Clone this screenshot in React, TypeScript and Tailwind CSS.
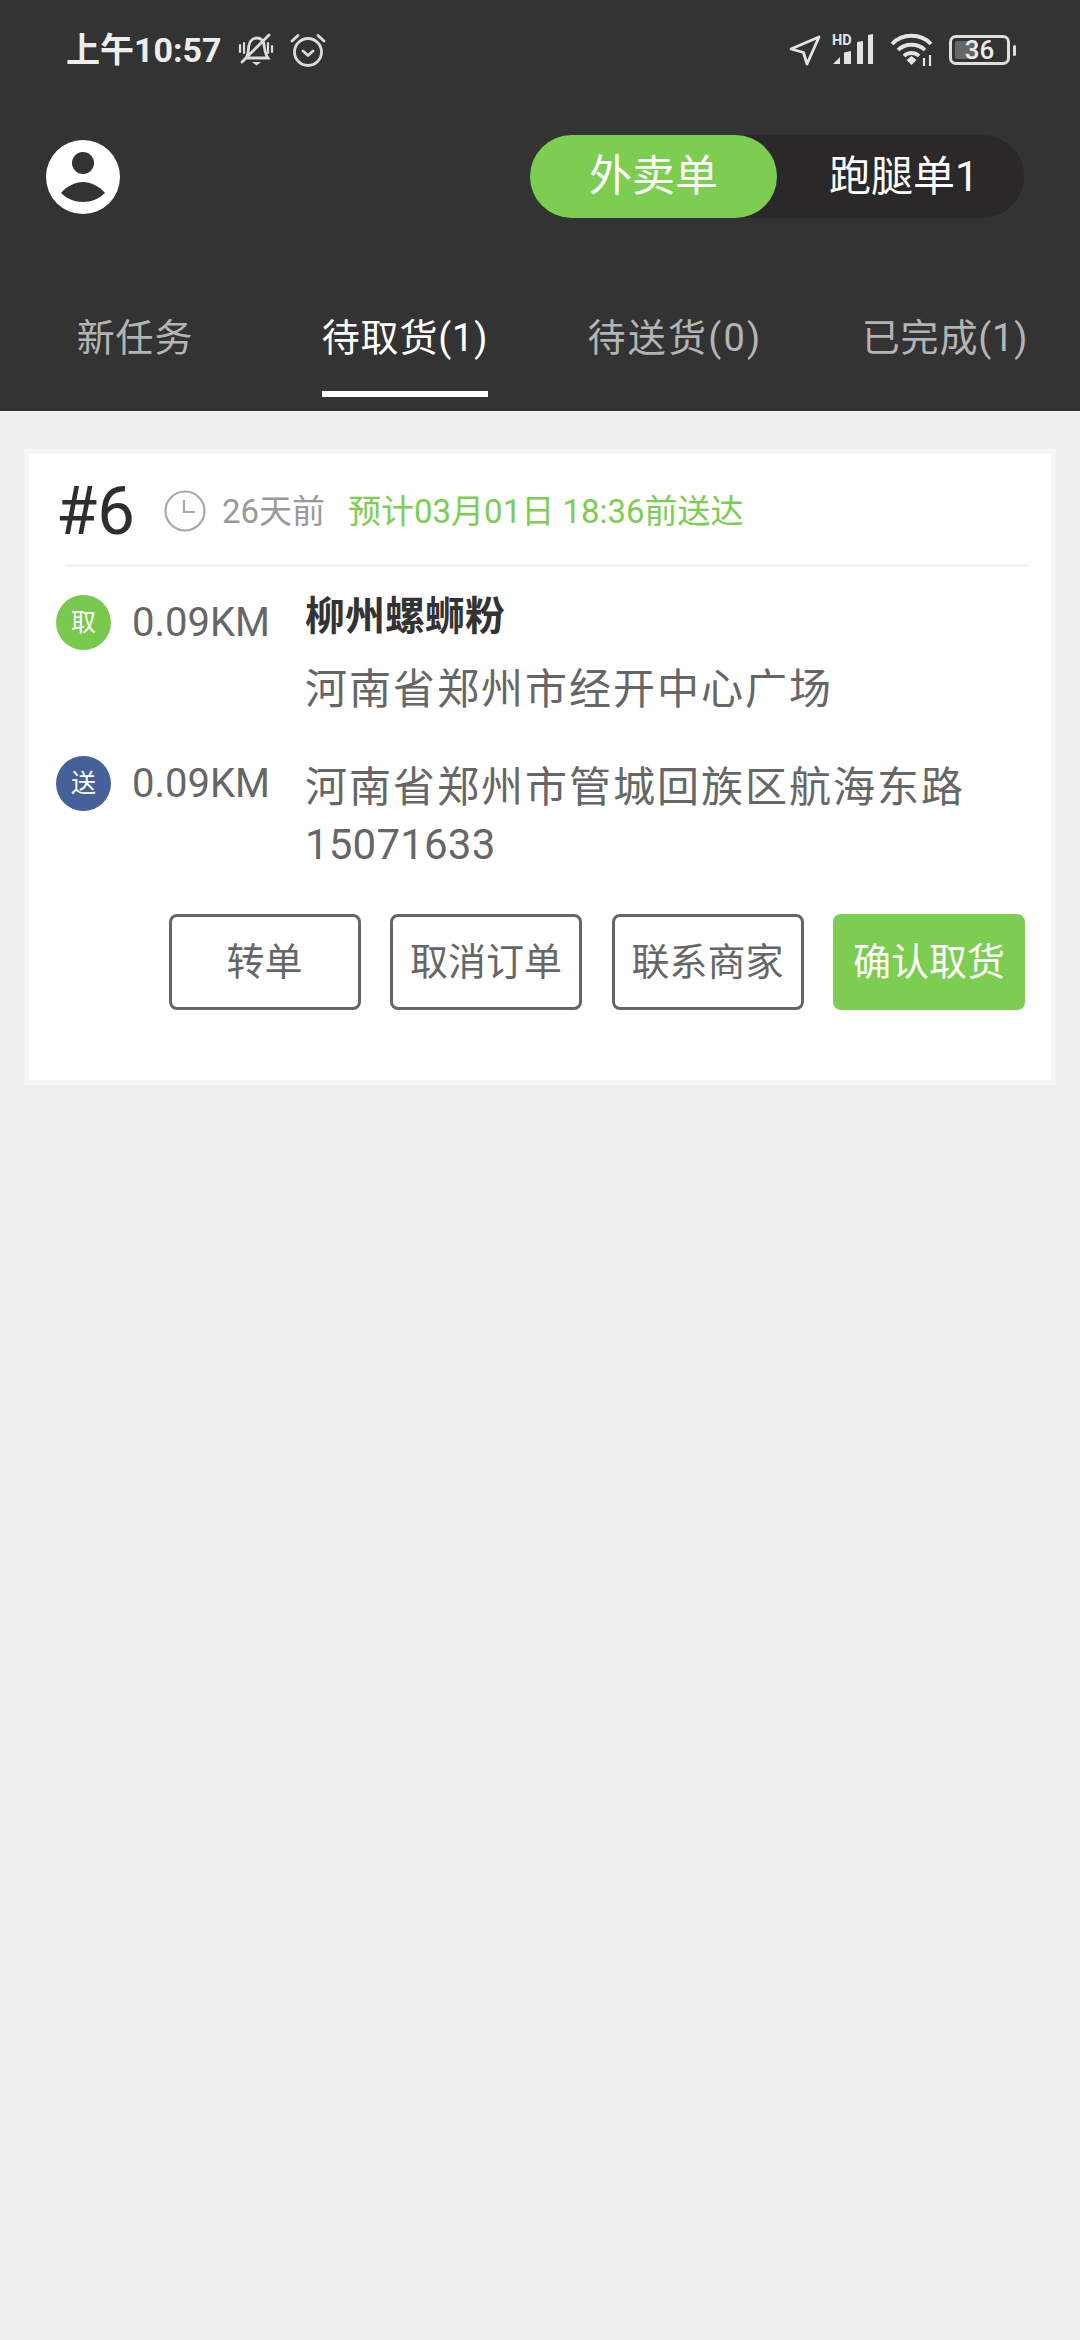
function StatusIcons() {
  return (
    <div className="flex items-center">
      <svg width="32" height="32" viewBox="0 0 32 32" fill="none" stroke="#e4e4e4" strokeWidth="2.8" strokeLinejoin="round">
        <path d="M2 15 30 3 18 30 14.5 18.5Z" />
      </svg>
      <svg className="ml-[11px] mb-[4px]" width="42" height="36" viewBox="0 -4 42 36" fill="#e4e4e4">
        <text x="0" y="11" fontSize="14.5" fontWeight="700" fontFamily="Roboto, sans-serif">HD</text>
        <path d="M1 30 8 23V30ZM12 18.500 19 17V30H12ZM25 8 31 7V30H25ZM36 1 41 0V30H36Z" />
      </svg>
      <svg className="ml-[16px]" width="44" height="34" viewBox="0 0 44 34" fill="none" stroke="#e4e4e4" strokeWidth="3.8">
        <path d="M2 11C12 0 31 0 41 11M8 17C15 10 28 10 35 17M14 23C18 19 25 19 29 23" />
        <path d="M16.500 27 21.500 23 26.500 27 21.500 32Z" fill="#e4e4e4" stroke="none" />
        <path d="M34 25v8M40 22v11" strokeWidth="2.200" />
      </svg>
      <div className="relative ml-[15px] flex h-[30px] w-[61px] items-center justify-center rounded-[7px] border-[3px] border-[#dedede]">
        <div className="absolute left-[3px] top-[3px] h-[18px] w-[20px] rounded-[2px] bg-[#666666]" />
        <span className="relative text-[26px] leading-none font-medium text-[#ececec]">36</span>
      </div>
      <div className="ml-[3px] h-[11px] w-[3px] rounded-full bg-[#dedede]" />
    </div>
  );
}

function StatusBar() {
  return (
    <div className="flex h-[34px] items-center justify-between pl-[66px] pr-[64px]">
      <div className="flex items-center">
        <span className="text-[34px] leading-none font-bold text-[#eeeeee]">上午10:57</span>
        <svg className="ml-[16px]" width="36" height="34" viewBox="0 0 36 34" fill="none" stroke="#dcdcdc" strokeWidth="2.8" strokeLinecap="round">
          <path d="M8 25C11 21 10 16 11 12 12 7 16 5 19 5 23 5 26 8 26 12 27 17 27 21 30 25ZM4 29 31 2" />
          <path d="M2 12v7M6 10v10M30 10v10M34 13v6" strokeWidth="2.200" />
          <path d="M14 29h9l-4.500 3.500Z" fill="#dcdcdc" stroke="none" />
        </svg>
        <svg className="ml-[16px]" width="36" height="34" viewBox="0 0 36 34" fill="none" stroke="#dcdcdc" strokeWidth="2.8" strokeLinecap="round" strokeLinejoin="round">
          <circle cx="18" cy="19" r="13.500" />
          <path d="M13 18 18 22.500 23 18M2 8 8 2.500M34 8 28 2.500" />
        </svg>
      </div>
      <StatusIcons />
    </div>
  );
}

function TopRow() {
  return (
    <div className="mt-[68px] flex h-[83px] items-center justify-between pl-[46px] pr-[56px]">
      <svg width="74" height="74" viewBox="0 0 74 74">
        <circle cx="37" cy="37" r="37" fill="#ffffff" />
        <circle cx="37" cy="23" r="11" fill="#333333" />
        <path d="M15 53C21 46 29 42 37 42 45 42 53 46 59 53 53 59 45 62 37 62 29 62 21 59 15 53Z" fill="#333333" />
      </svg>
      <div className="flex h-[83px] w-[494px] items-center rounded-full bg-[#2a2828]">
        <div className="flex h-[83px] w-[247px] items-center justify-center rounded-full bg-[#7ccd52] text-[43px] text-white">外卖单</div>
        <div className="flex-1 pl-[52px] text-[42px] text-white">跑腿单1</div>
      </div>
    </div>
  );
}

const tabs = ["新任务", "待取货(1)", "待送货(0)", "已完成(1)"];

function Tabs() {
  return (
    <div className="mt-[95px] grid grid-cols-4">
      {tabs.map((t, i) => (
        <div key={t} className="flex flex-col items-center">
          <div className="flex flex-col items-stretch">
            <span className={`h-[78px] text-[38px] leading-[50px] whitespace-nowrap ${i === 2 ? "tracking-[2.200px]" : "tracking-[0.800px]"} ${i === 1 ? "text-white" : "text-[#b4b4b4]"}`}>{t}</span>
            <div className={`h-[6px] ${i === 1 ? "bg-white" : "bg-transparent"}`} />
          </div>
        </div>
      ))}
    </div>
  );
}

function Badge({ label, color }: { label: string; color: string }) {
  return (
    <div className={`flex h-[55px] w-[55px] shrink-0 items-center justify-center rounded-full text-[25px] text-white ${color}`}>
      {label}
    </div>
  );
}

const buttons = ["转单", "取消订单", "联系商家"];

function OrderCard() {
  return (
    <div className="mx-[24px] mt-[38px] h-[636px] border-[5px] border-[#f6f6f6] bg-white">
      <div className="flex h-[110px] items-center pt-[4px]">
        <span className="ml-[27px] text-[67px] leading-none text-[#2e2e2e]">#6</span>
        <svg className="ml-[29px]" width="42" height="42" viewBox="0 0 42 42" fill="none" stroke="#a8a8a8" strokeWidth="2.200">
          <circle cx="21" cy="21" r="19.500" />
          <path d="M20 10v12h11" />
        </svg>
        <span className="ml-[16px] text-[33px] leading-none text-[#999999]">26天前</span>
        <span className="ml-[23px] text-[33px] leading-none text-[#7ccd52]">预计03月01日 18:36前送达</span>
      </div>
      <div className="ml-[36px] mr-[22px] h-[3px] bg-[#f3f3f3]" />

      <div className="mt-[28px] flex">
        <div className="ml-[27px] flex h-[55px] w-[249px] shrink-0 items-center">
          <Badge label="取" color="bg-[#7ac94f]" />
          <span className="ml-[21px] text-[40px] leading-none text-[#666666]">0.09KM</span>
        </div>
        <div className="-mt-[3px]">
          <div className="text-[40px] leading-[50px] font-bold text-[#333333]">柳州螺蛳粉</div>
          <div className="mt-[22px] text-[42px] leading-[52px] tracking-[2px] text-[#666666]">河南省郑州市经开中心广场</div>
        </div>
      </div>

      <div className="mt-[40px] flex">
        <div className="ml-[27px] flex h-[55px] w-[249px] shrink-0 items-center">
          <Badge label="送" color="bg-[#46609a]" />
          <span className="ml-[21px] text-[40px] leading-none text-[#666666]">0.09KM</span>
        </div>
        <div className="w-[680px] pt-[3px] text-[42px] leading-[57px] text-[#666666]">
          <span className="tracking-[2px]">河南省郑州市管城回族区航海东路</span>
          <br />
          <span className="tracking-[0.200px]">15071633</span>
        </div>
      </div>

      <div className="mt-[41px] flex justify-end gap-[29.500px] pr-[26px]">
        {buttons.map((b) => (
          <div key={b} className="flex h-[96px] w-[192px] items-center justify-center rounded-[8px] border-[3px] border-[#666666] text-[38px] text-[#666666]">
            {b}
          </div>
        ))}
        <div className="flex h-[96px] w-[192px] items-center justify-center rounded-[8px] bg-[#7ccd52] text-[38px] text-white">确认取货</div>
      </div>
    </div>
  );
}

export default function App() {
  return (
    <div className="min-h-[2340px] w-[1080px] bg-[#efefef] [font-family:Roboto,'Noto_Sans_CJK_SC',sans-serif]">
      <div className="h-[411px] bg-[#333333] pt-[33px]">
        <StatusBar />
        <TopRow />
        <Tabs />
      </div>
      <OrderCard />
    </div>
  );
}
